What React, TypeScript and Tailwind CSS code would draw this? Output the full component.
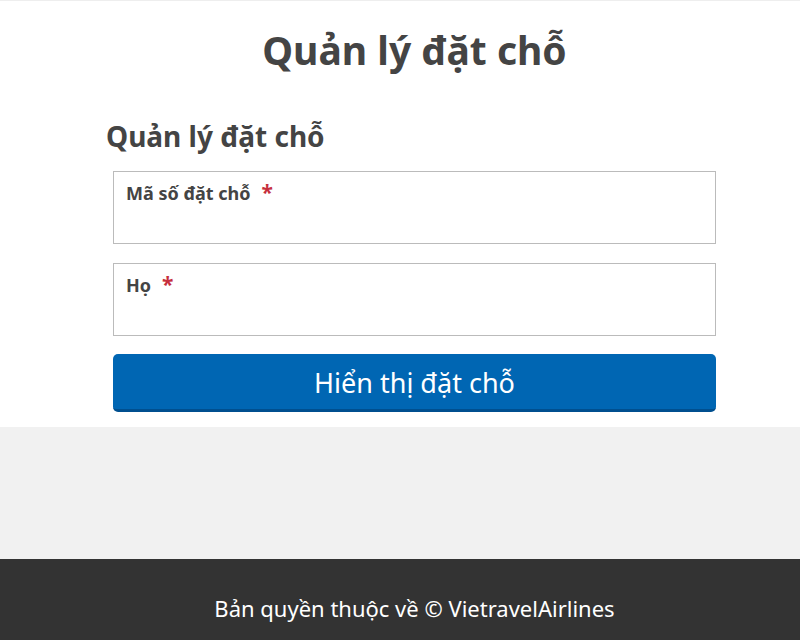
export default function App() {
  return (
    <div className="flex min-h-screen flex-col font-['Noto_Sans',sans-serif] text-[#444]">
      <div className="border-t border-[#eeeeee] bg-white pb-[15px] pl-[29px]">
        <h1 className="pt-[22px] text-center text-[39px] leading-[54px] font-bold">
          Quản lý đặt chỗ
        </h1>
        <div className="mx-auto mt-[40px] w-[617px]">
          <h2 className="text-[28px] leading-[38px] font-bold">Quản lý đặt chỗ</h2>
          <form className="mt-[16px] flex flex-col gap-[19px] px-[7px]">
            <label className="block h-[73px] border border-[#bbbbbb] bg-white px-[12px] pt-[5px]">
              <span className="text-[18px] font-bold">Mã số đặt chỗ</span>
              <span className="ml-[11px] text-[21px] font-bold text-[#c62f3d]">*</span>
            </label>
            <label className="block h-[73px] border border-[#bbbbbb] bg-white px-[12px] pt-[5px]">
              <span className="text-[18px] font-bold">Họ</span>
              <span className="ml-[11px] text-[21px] font-bold text-[#c62f3d]">*</span>
            </label>
            <button
              type="button"
              className="-mt-[1px] h-[58px] rounded-[5px] border-b-[3px] border-[#004f8f] bg-[#0066b3] pt-[4px] text-[27px] text-white"
            >
              Hiển thị đặt chỗ
            </button>
          </form>
        </div>
      </div>
      <div className="h-[132px] bg-[#f1f1f1]" />
      <footer className="flex h-[81px] items-center justify-center bg-[#333333] pt-[18px] pl-[29px] text-[22px] text-white">
        Bản quyền thuộc về © VietravelAirlines
      </footer>
    </div>
  );
}
